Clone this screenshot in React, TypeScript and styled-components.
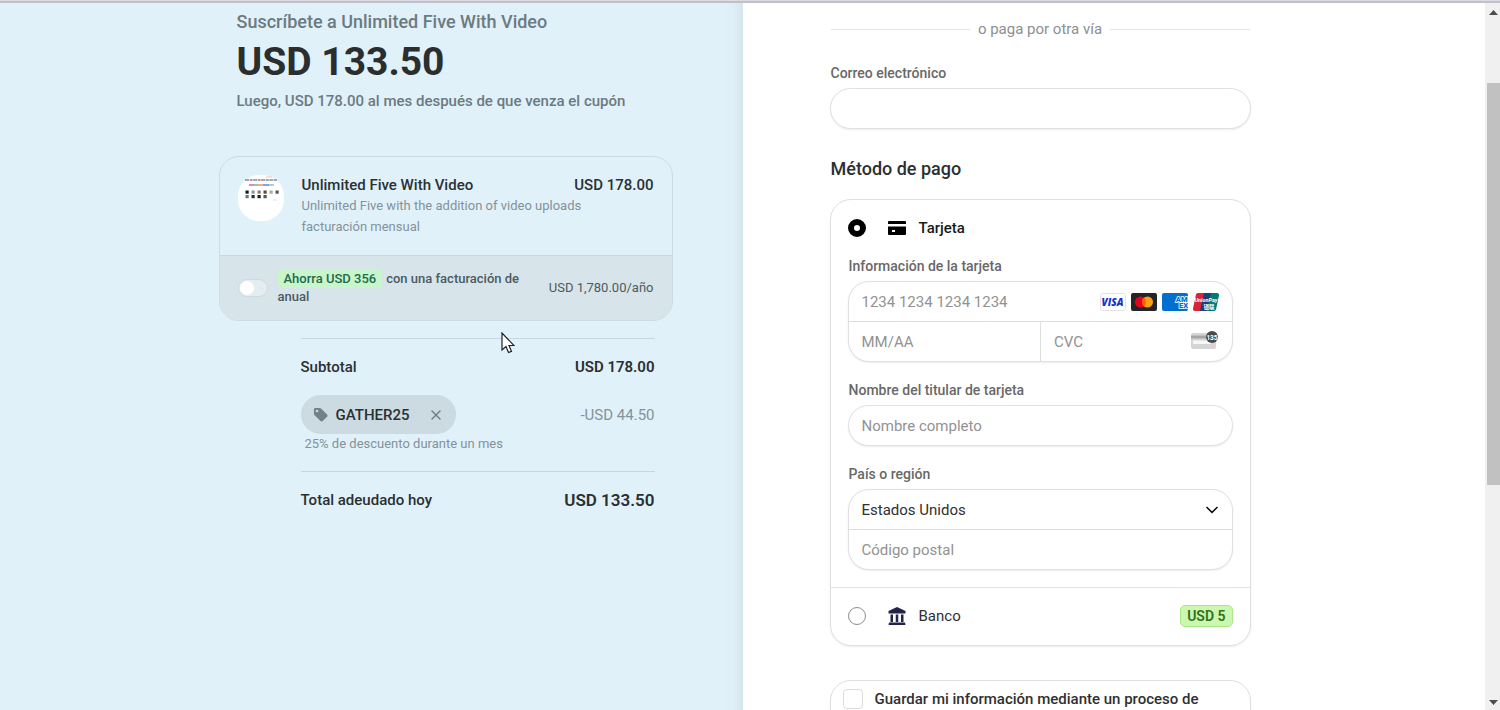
import React from "react";
import styled, { createGlobalStyle, css } from "styled-components";
import { ChevronDown, X } from "lucide-react";

const GlobalStyle = createGlobalStyle`
  *, *::before, *::after { box-sizing: border-box; }
  body {
    margin: 0;
    background: #ffffff;
    color: #2b2f31;
    font-family: Roboto, "Liberation Sans", sans-serif;
    font-size: 15px;
    line-height: 20px;
  }
  h1, h2, p, dl, dd, dt, fieldset { margin: 0; padding: 0; border: 0; }
  button, input, select { font: inherit; color: inherit; margin: 0; }
`;

const Page = styled.div`
  display: flex;
  flex-direction: column;
  height: 100vh;
  overflow: hidden;
`;

const TopEdge = styled.div`
  flex: none;
  height: 3px;
  background: #dcdbe3;
  border-bottom: 2px solid #bfc0c9;
`;

const Columns = styled.div`
  flex: 1;
  min-height: 0;
  display: grid;
  grid-template-columns: minmax(0, 1fr) minmax(0, 1fr) 15px;
`;

/* ---------- Order summary ---------- */

const SummaryPanel = styled.section`
  display: flex;
  justify-content: flex-end;
  min-height: 0;
  padding: 7px 70px 0 16px;
  background: linear-gradient(to left, #d6e6ee 0, #dfeff8 10px, #e0f1fa 22px);
`;

const SummaryContent = styled.div`
  width: 100%;
  max-width: 454px;
`;

const Intro = styled.header`
  padding: 0 18px;
  color: #6c7a81;
  font-weight: 500;
`;

const PlanHeading = styled.h1`
  font-size: 18px;
  font-weight: 500;
  line-height: 24px;
`;

const Price = styled.p`
  margin: 4px 0;
  color: #2a2e2f;
  font-size: 39px;
  font-weight: 700;
  line-height: 48px;
`;

const Renewal = styled.p`
  font-size: 15px;
  line-height: 22px;
`;

const PlanCard = styled.article`
  margin-top: 44px;
  overflow: hidden;
  border: 1px solid #cbdce4;
  border-radius: 20px;
`;

const PlanRow = styled.div`
  display: flex;
  gap: 18px;
  padding: 18px;
`;

const Thumbnail = styled.svg`
  flex: none;
  width: 46px;
  height: 46px;
`;

const PlanText = styled.div`
  flex: 1;
  color: #859299;
  font-size: 13px;
  line-height: 21px;
`;

const PlanTitle = styled.div`
  display: flex;
  justify-content: space-between;
  color: #2b3033;
  font-size: 15px;
  font-weight: 500;
  line-height: 20px;
`;

const UpsellRow = styled.div`
  display: flex;
  align-items: center;
  gap: 10px;
  padding: 14px 18px;
  border-top: 1px solid #c8d8df;
  background: #d7e5eb;
  color: #4c5a61;
  font-size: 13px;
  line-height: 18px;
`;

const Toggle = styled.input`
  appearance: none;
  flex: none;
  display: flex;
  align-items: center;
  width: 30px;
  height: 18px;
  padding: 0 1px;
  border: 1px solid #cdd9de;
  border-radius: 9px;
  background: #e4edf1;

  &::before {
    content: "";
    width: 14px;
    height: 14px;
    border-radius: 50%;
    background: #ffffff;
  }
`;

const UpsellLabel = styled.label`
  flex: 1;
  max-width: 256px;
  font-weight: 500;
`;

const Saving = styled.mark`
  margin-right: 4px;
  padding: 2px 6px;
  border-radius: 4px;
  background: #c8f5c9;
  color: #1d6b50;
`;

const UpsellPrice = styled.span`
  margin-left: auto;
`;

const Totals = styled.dl`
  margin: 17px 18px 0 82px;
`;

const TotalLine = styled.div<{ $ruled?: boolean }>`
  display: flex;
  align-items: center;
  justify-content: space-between;
  line-height: 24px;
  font-weight: 500;
  ${(p) =>
    p.$ruled &&
    css`
      padding-top: 16px;
      border-top: 1px solid #c5d7df;
    `}
`;

const Amount = styled.dd<{ $tone?: "muted" | "large" }>`
  font-size: ${(p) => (p.$tone === "large" ? 17 : 15)}px;
  font-weight: ${(p) => (p.$tone === "muted" ? 400 : 600)};
  color: ${(p) => (p.$tone === "muted" ? "#859299" : "inherit")};
`;

const CouponBlock = styled.div`
  margin: 16px 0 18px;
`;

const Coupon = styled.dt`
  display: flex;
  align-items: center;
  gap: 8px;
  height: 39px;
  padding: 0 12px;
  border-radius: 20px;
  background: #ccdbe1;
`;

const TagIcon = styled.svg`
  width: 15px;
  height: 15px;
  fill: #748087;
`;

const RemoveButton = styled.button`
  display: flex;
  margin-left: 10px;
  padding: 0;
  border: 0;
  background: none;
  color: #6f7c83;
`;

const CouponNote = styled.dd`
  padding: 1px 4px 0;
  color: #859299;
  font-size: 13px;
  line-height: 18px;
`;

/* ---------- Payment form ---------- */

const PaymentPanel = styled.main`
  min-height: 0;
  padding: 16px 16px 0 87px;
`;

const Form = styled.form`
  width: 100%;
  max-width: 421px;
`;

const Separator = styled.div`
  display: flex;
  align-items: center;
  gap: 8px;
  margin-bottom: 25px;
  padding: 0 1px;
  color: #8b8f92;
  font-size: 15px;

  &::before,
  &::after {
    content: "";
    flex: 1;
    height: 1px;
    background: #e4e4e4;
  }
`;

const FieldLabel = styled.label`
  display: block;
  margin-bottom: 6px;
  padding: 0 1px;
  color: #686868;
  font-size: 14px;
  font-weight: 500;
  line-height: 18px;
`;

const boxed = css`
  border: 1px solid #e0e0e0;
  border-radius: 21px;
  background: #ffffff;
  box-shadow: 0 1px 2px rgba(0, 0, 0, 0.08);
`;

const TextInput = styled.input<{ $boxed?: boolean }>`
  display: block;
  width: 100%;
  min-width: 0;
  height: 39px;
  padding: 0 13px;
  border: 0;
  background: none;
  color: #303030;
  font-size: 15px;
  outline: none;

  &::placeholder {
    color: #929292;
    opacity: 1;
  }

  ${(p) =>
    p.$boxed &&
    css`
      ${boxed}
      height: 41px;
    `}
`;

const SectionTitle = styled.h2`
  margin: 28px 0 18px;
  padding: 0 1px;
  font-size: 18px;
  font-weight: 500;
  line-height: 24px;
`;

const Methods = styled.div`
  ${boxed}
`;

const MethodRow = styled.label<{ $selected?: boolean }>`
  display: flex;
  align-items: center;
  color: ${(p) => (p.$selected ? "#1a1a1a" : "#303030")};
  font-size: 15px;
  font-weight: ${(p) => (p.$selected ? 500 : 400)};
`;

const Radio = styled.input`
  appearance: none;
  width: 18px;
  height: 18px;
  margin-right: 22px;
  border: 1px solid #8f8f8f;
  border-radius: 50%;
  background: #ffffff;

  &:checked {
    border: 6px solid #000000;
  }
`;

const MethodIcon = styled.svg`
  width: 18px;
  height: 18px;
  margin-right: 13px;
`;

const CardMethod = styled.div`
  display: flex;
  flex-direction: column;
  gap: 19px;
  padding: 18px 17px 17px;
`;

const BankMethod = styled.div`
  padding: 17px 17px 18px;
  border-top: 1px solid #e3e3e3;
`;

const Badge = styled.span`
  margin-left: auto;
  padding: 1px 6px;
  border: 1px solid #a9e88a;
  border-radius: 5px;
  background: #cbf7ae;
  color: #31701c;
  font-size: 14px;
  font-weight: 600;
  line-height: 18px;
`;

const Group = styled.div`
  ${boxed}
`;

const GroupRow = styled.div<{ $split?: boolean }>`
  display: grid;
  grid-template-columns: ${(p) => (p.$split ? "1fr 1fr" : "1fr auto")};
  align-items: center;

  & + & {
    border-top: 1px solid #dedede;
  }
`;

const SplitCell = styled.div`
  display: flex;
  align-items: center;

  & + & {
    border-left: 1px solid #dedede;
  }
`;

const Brands = styled.div`
  display: flex;
  gap: 5px;
  padding-right: 13px;

  svg {
    width: 26px;
    height: 18px;
  }
`;

const CvcIcon = styled.svg`
  flex: none;
  width: 28px;
  height: 18px;
  margin: 0 13px 4px 0;
`;

const SelectBox = styled.div`
  display: grid;
  grid-column: 1 / -1;
  align-items: center;

  & > * {
    grid-area: 1 / 1;
  }

  svg {
    justify-self: end;
    margin-right: 10px;
    pointer-events: none;
    color: #111111;
  }
`;

const Select = styled.select`
  appearance: none;
  width: 100%;
  height: 39px;
  padding: 0 13px;
  border: 0;
  border-radius: 21px;
  background: none;
  color: #303030;
  font-size: 15px;
`;

const SaveCard = styled.div`
  ${boxed}
  margin-top: 34px;
  padding: 8px 12px 40px;
`;

const SaveLabel = styled.label`
  display: flex;
  align-items: center;
  gap: 12px;
  color: #303030;
  font-weight: 500;
`;

const Checkbox = styled.input`
  appearance: none;
  flex: none;
  width: 20px;
  height: 20px;
  border: 1px solid #dcdcdc;
  border-radius: 4px;
  background: #ffffff;
`;

/* ---------- Scroll bar and pointer ---------- */

const ScrollTrack = styled.div`
  display: flex;
  flex-direction: column;
  align-items: flex-end;
  min-height: 0;
  background: #f0f0f0;
`;

const ScrollArrow = styled.svg`
  flex: none;
  width: 13px;
  height: 17px;
  fill: #4d4d4d;
`;

const ScrollSpace = styled.div<{ $share: number }>`
  flex: ${(p) => p.$share} 1 0;
`;

const ScrollThumb = styled.div`
  flex: 402 1 0;
  width: 13px;
  background: #c1c1c1;
`;

const Pointer = styled.svg`
  position: absolute;
  left: 501px;
  top: 332px;
  width: 14px;
  height: 22px;
  pointer-events: none;
`;

function PlanThumbnail() {
  const columns = [8, 14, 20, 26, 32, 38];
  return (
    <Thumbnail viewBox="0 0 46 46" aria-hidden="true">
      <rect width="46" height="46" rx="21" fill="#ffffff" />
      <path d="M7 5h32" stroke="#4c5058" strokeWidth="1.200" strokeDasharray="4 .6 3 .5" />
      <path d="M28 2h6" stroke="#d9b8c0" strokeWidth=".8" />
      <path d="M11 10h5" stroke="#e3609a" strokeWidth="1.400" />
      <path d="M16 10h4" stroke="#65b7a8" strokeWidth="1.400" />
      <path d="M20 10h5" stroke="#e79372" strokeWidth="1.400" />
      <path d="M25 10h6" stroke="#5487d8" strokeWidth="1.400" />
      <path d="M31 10h5" stroke="#70cbd8" strokeWidth="1.400" />
      {columns.map((x, i) => (
        <rect key={x} x={x - 0.5} y="15.500" width="3.200" height="3.200" fill={["#16181b", "#8b98a5", "#8a806c", "#5a4b33", "#a7a9a2", "#4e5a4a"][i]} />
      ))}
      {columns.slice(0, 4).map((x, i) => (
        <rect key={x} x={x - 0.5} y="20" width="3.200" height="3.200" fill={["#67757f", "#2c3034", "#1d2220", "#50565a"][i]} />
      ))}
      <path d="M35 25h4" stroke="#dde2e8" strokeWidth="1" />
    </Thumbnail>
  );
}

function CardBrands() {
  return (
    <Brands>
      <svg viewBox="0 0 26 18" role="img" aria-label="Visa">
        <rect x=".5" y=".5" width="25" height="17" rx="2" fill="#fff" stroke="#e3e3e3" />
        <text x="12.500" y="12.700" textAnchor="middle" fontFamily="Open Sans, sans-serif" fontSize="10" fontWeight="800" fontStyle="italic" fill="#1a2fd0">VISA</text>
      </svg>
      <svg viewBox="0 0 26 18" role="img" aria-label="Mastercard">
        <rect width="26" height="18" rx="2" fill="#252525" />
        <circle cx="9.500" cy="9" r="5.500" fill="#eb001b" />
        <circle cx="16.500" cy="9" r="5.500" fill="#f79e1b" />
        <path d="M13 4.760a5.500 5.500 0 0 1 0 8.480a5.500 5.500 0 0 1 0-8.480z" fill="#ff5f00" />
      </svg>
      <svg viewBox="0 0 26 18" role="img" aria-label="American Express">
        <rect width="26" height="18" rx="2" fill="#016fd0" />
        <g fontFamily="Roboto, sans-serif" fontSize="7.500" fontWeight="900" fill="#016fd0" stroke="#fff" strokeWidth="1.600" paintOrder="stroke" textAnchor="end">
          <text x="25.500" y="8.800">AM</text>
          <text x="26" y="15">EX</text>
        </g>
      </svg>
      <svg viewBox="0 0 26 18" role="img" aria-label="UnionPay">
        <path d="M5 0h8l-4 18H2a2 2 0 0 1-2-2.500L3 1.500A2 2 0 0 1 5 0z" fill="#d6243a" />
        <path d="M11 0h8l-4 18H7z" fill="#1c3f78" />
        <path d="M18 0h6a2 2 0 0 1 2 2.500l-3 14a2 2 0 0 1-2 1.500h-7z" fill="#057a72" />
        <text x="13" y="8.500" textAnchor="middle" fontFamily="Roboto, sans-serif" fontSize="5.500" fontWeight="700" fontStyle="italic" fill="#fff">UnionPay</text>
        <text x="16" y="15.500" textAnchor="middle" fontFamily="Noto Sans CJK SC, sans-serif" fontSize="5.500" fontWeight="700" fill="#fff">银联</text>
      </svg>
    </Brands>
  );
}

export default function App() {
  return (
    <>
      <GlobalStyle />
      <Page>
        <TopEdge />
        <Columns>
          <SummaryPanel>
            <SummaryContent>
              <Intro>
                <PlanHeading>Suscríbete a Unlimited Five With Video</PlanHeading>
                <Price>USD 133.50</Price>
                <Renewal>Luego, USD 178.00 al mes después de que venza el cupón</Renewal>
              </Intro>

              <PlanCard>
                <PlanRow>
                  <PlanThumbnail />
                  <PlanText>
                    <PlanTitle>
                      <span>Unlimited Five With Video</span>
                      <span>USD 178.00</span>
                    </PlanTitle>
                    <p>Unlimited Five with the addition of video uploads</p>
                    <p>facturación mensual</p>
                  </PlanText>
                </PlanRow>
                <UpsellRow>
                  <Toggle type="checkbox" role="switch" id="annual" />
                  <UpsellLabel htmlFor="annual">
                    <Saving>Ahorra USD 356</Saving>
                    <span>con una facturación de</span>
                    <br />
                    <span>anual</span>
                  </UpsellLabel>
                  <UpsellPrice>USD 1,780.00/año</UpsellPrice>
                </UpsellRow>
              </PlanCard>

              <Totals>
                <TotalLine $ruled>
                  <dt>Subtotal</dt>
                  <Amount>USD 178.00</Amount>
                </TotalLine>
                <CouponBlock>
                  <TotalLine>
                    <Coupon>
                      <TagIcon viewBox="0 0 16 16" aria-hidden="true">
                        <path fillRule="evenodd" d="M1 2.500A1.500 1.500 0 0 1 2.500 1h4.800c.5 0 .9.200 1.200.500l6.500 6.500c.7.700.7 1.700 0 2.400l-4.600 4.600c-.7.700-1.700.7-2.400 0L1.500 8.500C1.200 8.200 1 7.800 1 7.300zM4.300 5.700a1.400 1.400 0 1 0 0-2.800a1.400 1.400 0 0 0 0 2.800z" />
                      </TagIcon>
                      <span>GATHER25</span>
                      <RemoveButton type="button" aria-label="Quitar cupón">
                        <X size={16} strokeWidth={2} />
                      </RemoveButton>
                    </Coupon>
                    <Amount $tone="muted">-USD 44.50</Amount>
                  </TotalLine>
                  <CouponNote>25% de descuento durante un mes</CouponNote>
                </CouponBlock>
                <TotalLine $ruled>
                  <dt>Total adeudado hoy</dt>
                  <Amount $tone="large">USD 133.50</Amount>
                </TotalLine>
              </Totals>
            </SummaryContent>
          </SummaryPanel>

          <PaymentPanel>
            <Form>
              <Separator>o paga por otra vía</Separator>
              <FieldLabel htmlFor="email">Correo electrónico</FieldLabel>
              <TextInput $boxed id="email" type="email" />

              <SectionTitle>Método de pago</SectionTitle>
              <Methods>
                <CardMethod>
                  <MethodRow $selected>
                    <Radio type="radio" name="method" defaultChecked />
                    <MethodIcon viewBox="0 0 18 18" aria-hidden="true">
                      <path fillRule="evenodd" d="M1 2h16a1 1 0 0 1 1 1v2H0V3a1 1 0 0 1 1-1zM0 7.500h18V15a1 1 0 0 1-1 1H1a1 1 0 0 1-1-1zM4 11v2h3v-2z" />
                    </MethodIcon>
                    Tarjeta
                  </MethodRow>

                  <div>
                    <FieldLabel htmlFor="number">Información de la tarjeta</FieldLabel>
                    <Group>
                      <GroupRow>
                        <TextInput id="number" placeholder="1234 1234 1234 1234" />
                        <CardBrands />
                      </GroupRow>
                      <GroupRow $split>
                        <SplitCell>
                          <TextInput aria-label="Fecha de vencimiento" placeholder="MM/AA" />
                        </SplitCell>
                        <SplitCell>
                          <TextInput aria-label="Código de seguridad" placeholder="CVC" />
                          <CvcIcon viewBox="0 0 28 18" aria-hidden="true">
                            <rect x="0" y="2" width="25" height="16" rx="2" fill="#d5d5d5" />
                            <rect x="0" y="4.500" width="25" height="3" fill="#a5a5a5" />
                            <rect x="2" y="9.500" width="18" height="3.500" fill="#f7f7f7" />
                            <circle cx="21" cy="6" r="6" fill="#4a4a4a" />
                            <text x="21" y="8.500" textAnchor="middle" fontFamily="Roboto, sans-serif" fontSize="6.500" fontWeight="700" fill="#fff">135</text>
                          </CvcIcon>
                        </SplitCell>
                      </GroupRow>
                    </Group>
                  </div>

                  <div>
                    <FieldLabel htmlFor="holder">Nombre del titular de tarjeta</FieldLabel>
                    <TextInput $boxed id="holder" placeholder="Nombre completo" />
                  </div>

                  <div>
                    <FieldLabel htmlFor="country">País o región</FieldLabel>
                    <Group>
                      <GroupRow>
                        <SelectBox>
                          <Select id="country" defaultValue="us">
                            <option value="us">Estados Unidos</option>
                          </Select>
                          <ChevronDown size={20} strokeWidth={2} />
                        </SelectBox>
                      </GroupRow>
                      <GroupRow>
                        <TextInput aria-label="Código postal" placeholder="Código postal" />
                      </GroupRow>
                    </Group>
                  </div>
                </CardMethod>

                <BankMethod>
                  <MethodRow>
                    <Radio type="radio" name="method" />
                    <MethodIcon viewBox="0 0 18 18" fill="#22234d" aria-hidden="true">
                      <path d="M9 0l8.500 4v2.500H.5V4zM2.500 7.500H5V15H2.500zM7.750 7.500h2.500V15h-2.500zM13 7.500h2.500V15H13zM1 15.500h16l.5 2.500H.5z" />
                    </MethodIcon>
                    Banco
                    <Badge>USD 5</Badge>
                  </MethodRow>
                </BankMethod>
              </Methods>

              <SaveCard>
                <SaveLabel>
                  <Checkbox type="checkbox" />
                  Guardar mi información mediante un proceso de
                </SaveLabel>
              </SaveCard>
            </Form>
          </PaymentPanel>

          <ScrollTrack aria-hidden="true">
            <ScrollArrow viewBox="0 0 13 17">
              <path d="M2 12l4.500-5 4.500 5z" />
            </ScrollArrow>
            <ScrollSpace $share={63} />
            <ScrollThumb />
            <ScrollSpace $share={208} />
            <ScrollArrow viewBox="0 0 13 17">
              <path d="M2 7l4.500 5L11 7z" />
            </ScrollArrow>
          </ScrollTrack>
        </Columns>
      </Page>
      <Pointer viewBox="0 0 14 22" aria-hidden="true">
        <path d="M1 1v17l4-3.500 2.500 6 3-1.200-2.500-5.800h5z" fill="#fff" stroke="#1f2326" strokeWidth="1.200" />
      </Pointer>
    </>
  );
}
